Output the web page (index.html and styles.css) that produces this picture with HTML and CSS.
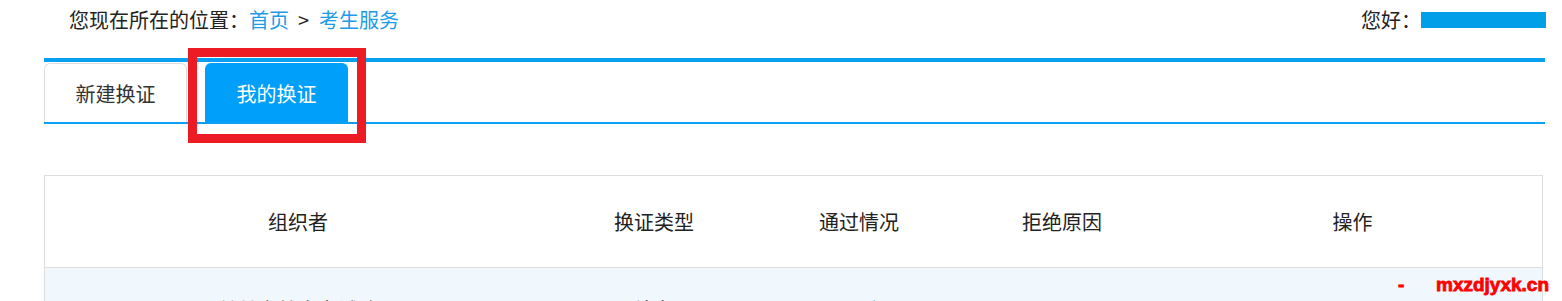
FILE: index.html
```html
<!DOCTYPE html>
<html lang="zh-CN">
<head>
<meta charset="utf-8">
<title>我的换证</title>
<link rel="stylesheet" href="styles.css">
</head>
<body>
<div class="page">
  <div class="topbar">
    <div class="crumb">您现在所在的位置：<a class="link" href="#">首页</a><span class="sep">&gt;</span><a class="link" href="#">考生服务</a></div>
    <div class="hello">您好：<span class="userbar"></span></div>
  </div>
  <div class="tabs">
    <div class="tab">新建换证</div>
    <div class="tab active">我的换证</div>
  </div>
  <div class="table">
    <div class="row head">
      <div class="c c1">组织者</div>
      <div class="c c2">换证类型</div>
      <div class="c c3">通过情况</div>
      <div class="c c4">拒绝原因</div>
      <div class="c c5">操作</div>
    </div>
    <div class="row body">
      <div class="c c1">某某市教育考试院</div>
      <div class="c c2">补办</div>
      <div class="c c3 blue">通过</div>
      <div class="c c4">-</div>
      <div class="c c5">-</div>
    </div>
  </div>
  <div class="mark"></div>
  <div class="wm"><span class="dash">-</span><span>mxzdjyxk.cn</span></div>
</div>
</body>
</html>
```
FILE: styles.css
```css
* { box-sizing: border-box; }
html, body { margin: 0; padding: 0; background: #fff; }
body {
  font-family: "Noto Sans CJK SC", "Noto Sans", sans-serif;
  color: #222;
  font-size: 20px;
  overflow: hidden;
  height: 301px;
}
.page { position: relative; width: 1562px; height: 301px; }
.topbar {
  height: 40px;
  display: flex;
  align-items: center;
  justify-content: space-between;
  padding: 0 16px 0 69px;
}
.crumb, .hello { display: flex; align-items: center; line-height: 1; }
.link { color: #1e9be8; text-decoration: none; }
.sep { margin: 0 10px 0 9px; }
.userbar {
  display: inline-block;
  width: 125px;
  height: 16px;
  background: #009fe8;
}
.tabs {
  margin: 18px 17px 0 44px;
  border-top: 4px solid #0aa0f2;
  border-bottom: 2px solid #0aa0f2;
  padding-top: 1px;
  height: 66px;
  display: flex;
  gap: 18px;
}
.tab {
  width: 143px;
  height: 59px;
  border: 1px solid #ddd;
  border-bottom: none;
  border-radius: 6px 6px 0 0;
  display: flex;
  align-items: center;
  justify-content: center;
  font-size: 20px;
  color: #333;
}
.tab.active {
  background: #00a0fa;
  border-color: #00a0fa;
  color: #fff;
}
.table {
  margin: 51px 19px 0 44px;
  border: 1px solid #ddd;
  border-bottom: none;
}
.row { display: flex; }
.row.head { height: 92px; align-items: center; background: #fff; border-bottom: 1px solid #ddd; }
.row.body { height: 92px; align-items: flex-start; background: #f0f7fd; padding-top: 32px; }
.c { text-align: center; font-size: 20px; line-height: 20px; color: #222; }
.c1 { width: 506px; }
.c2 { width: 206px; }
.c3 { width: 204px; }
.c4 { width: 202px; }
.c5 { flex: 1; }
.blue { color: #1e9be8; }
.mark {
  position: absolute;
  left: 188px;
  top: 48px;
  width: 178px;
  height: 95px;
  border: 9px solid #ed1c24;
}
.wm {
  position: absolute;
  left: 1398px;
  top: 273px;
  display: flex;
  gap: 28px;
  font-family: "Liberation Sans", Arial, sans-serif;
  font-weight: 900;
  font-size: 19px;
  color: #f00;
  -webkit-text-stroke: 0.8px #f00;
  line-height: 24px;
}
.dash { width: 10px; }
```
